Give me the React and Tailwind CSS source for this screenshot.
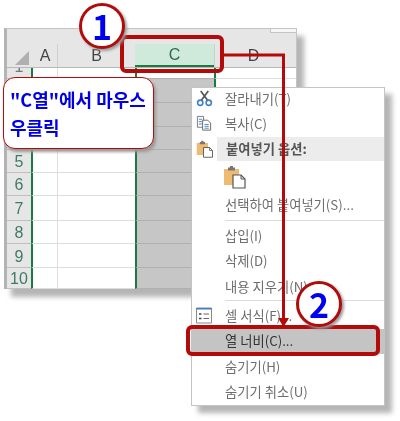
const FONT = "font-['Noto_Sans_CJK_KR','Noto_Sans',sans-serif]";

const rows = [
  { label: "1", h: "h-[11px]" },
  { label: "", h: "h-[24px]" },
  { label: "", h: "h-[24px]" },
  { label: "", h: "h-[23px]" },
  { label: "5", h: "h-[23px]" },
  { label: "6", h: "h-[24px]" },
  { label: "7", h: "h-[25px]" },
  { label: "8", h: "h-[23px]" },
  { label: "9", h: "h-[24px]" },
  { label: "10", h: "h-[21px]" },
];

function ScissorsIcon() {
  return (
    <svg width="17" height="17" viewBox="0 0 18 18" fill="none">
      <path d="M5 1 L12.5 11 M13 1 L5.5 11" stroke="#555" strokeWidth="1.8" />
      <circle cx="4.5" cy="13.5" r="2.8" stroke="#3f7fc4" strokeWidth="1.7" />
      <circle cx="13.5" cy="13.5" r="2.8" stroke="#3f7fc4" strokeWidth="1.7" />
    </svg>
  );
}

function CopyIcon() {
  return (
    <svg width="17" height="17" viewBox="0 0 18 18" fill="none">
      <path d="M1.5 1.5 H8 V13 H1.5 Z" fill="#fff" stroke="#777" />
      <path d="M3 4.5 H6.5 M3 7 H6.5 M3 9.5 H6.5" stroke="#4a86c5" />
      <path d="M7 5.5 H12.5 L15.5 8.5 V16 H7 Z" fill="#fff" stroke="#666" />
      <path d="M9 10 H13.5 M9 12 H13.5 M9 14 H13.5" stroke="#4a86c5" />
    </svg>
  );
}

function PasteIcon({ size }) {
  return (
    <svg width={size} height={size} viewBox="0 0 24 24" fill="none">
      <path d="M1 4 H16 V20 H1 Z" fill="#eebb72" />
      <path d="M5 4 V2.5 H7 V1 H10 V2.5 H12 V5.5 H5 Z" fill="#777" />
      <path d="M10 10 H18 L22 14 V23 H10 Z" fill="#fff" stroke="#555" strokeWidth="1.2" />
      <path d="M18 10 V14 H22" stroke="#555" strokeWidth="1" />
    </svg>
  );
}

function FormatIcon() {
  return (
    <svg width="16" height="17" viewBox="0 0 16 17" fill="none">
      <path d="M0.5 1 H15.5 V16 H0.5 Z" fill="#fff" stroke="#888" />
      <path d="M0.5 1 H15.5 V2.5 H0.5 Z" fill="#3f7fc4" />
      <path d="M3 7 H5.5 M3 11.5 H5.5" stroke="#444" strokeWidth="1.6" />
      <path d="M7.5 7 H13 M7.5 11.5 H13" stroke="#666" strokeWidth="1.2" />
    </svg>
  );
}

function Item({ icon, active, className = "h-[25.4px]", children }) {
  return (
    <div className={`flex items-center ${className} ${active ? "bg-[#c4c4c4]" : ""}`}>
      <div className="flex w-[33px] shrink-0 items-center pl-[4px]">{icon}</div>
      <span className={`text-[13.3px] ${active ? "text-[#333]" : "text-[#6e6e6e]"}`}>{children}</span>
    </div>
  );
}

function Badge({ className, children }) {
  return (
    <div
      className={`absolute flex h-[46px] w-[46px] items-center justify-center rounded-full border-[3px] border-[#b30a0a] bg-white text-[34px] leading-none font-bold text-[#0000f0] shadow-[2px_2px_3px_#999] ${className}`}
    >
      {children}
    </div>
  );
}

export default function App() {
  return (
    <div className={`relative h-[421px] w-[400px] overflow-hidden bg-white pt-[28px] pl-[4px] blur-[0.3px] ${FONT}`}>
      {/* sheet */}
      <div className="h-[261px] w-[293px] border-t border-r border-[#c4c4c4] border-l-[3px] border-l-[#b4b4b4] bg-[#e6e6e6] shadow-[7px_8px_5px_#b5b5b5]">
        <div className="flex h-[15px] justify-end">
          <div className="h-[4px] w-[26px] border-b border-l border-[#c4c4c4] bg-[#f6f6f6]" />
        </div>
        {/* column heads */}
        <div className="flex h-[23px] font-['Liberation_Sans',sans-serif] text-[16px] text-[#444]">
          <div className="flex w-[24px] items-end justify-end pr-[2px] pb-[2px]">
            <div className="h-0 w-0 border-b-[14px] border-l-[14px] border-b-[#b0b0b0] border-l-transparent" />
          </div>
          <div className="flex w-[27px] items-center justify-center border-r border-[#cfcfcf] pl-[2px]">A</div>
          <div className="flex w-[77px] items-center justify-center">B</div>
          <div className="flex w-[79px] items-center justify-center border-b-2 border-[#1a7a45] bg-[#cfeadb] text-[#2f6b4a]">C</div>
          <div className="flex flex-1 items-center justify-center border-l border-[#cfcfcf] pr-[4px]">D</div>
        </div>
        {/* rows */}
        <div className="flex h-[222px] flex-col border-t border-[#b8b8b8]">
          {rows.map((row, i) => (
            <div key={i} className={`flex ${row.h} overflow-hidden`}>
              <div className="flex w-[24px] items-center justify-center border-b border-[#c0c0c0] pt-[2px] font-['Liberation_Sans',sans-serif] text-[16px] text-[#3f7a68]">
                <span className={i === 0 ? "-translate-y-[7px] text-[#777]" : ""}>{row.label}</span>
              </div>
              <div className="w-[27px] border-r border-b border-l-2 border-[#dedede] border-l-[#1a7a45] bg-white" />
              <div className="w-[77px] border-b border-[#dedede] bg-white" />
              <div className={`w-[79px] border-b border-l-2 border-[#b0b0b0] border-l-[#1a7a45] ${i === 0 ? "bg-white" : "bg-[#c6c6c6]"}`} />
              <div className={`flex-1 border-b ${i < 2 ? "border-l-2 border-[#dedede] border-l-[#1a7a45] bg-white" : "border-[#b0b0b0] bg-[#c6c6c6]"}`} />
            </div>
          ))}
        </div>
      </div>

      {/* context menu */}
      <div className="absolute top-[87px] left-[191px] h-[319px] w-[194px] border border-[#c4c4c4] bg-white shadow-[7px_7px_5px_#b5b5b5]">
        <Item icon={<ScissorsIcon />} className="h-[23.3px] pb-[2px]">잘라내기(T)</Item>
        <Item icon={<CopyIcon />}>복사(C)</Item>
        <div className="flex h-[25px] items-center">
          <div className="flex w-[25px] shrink-0 items-center pl-[4px]">
            <PasteIcon size={18} />
          </div>
          <div className="flex h-[24px] flex-1 items-center bg-[#ececec] pl-[9px] text-[13.3px] font-bold text-[#555]">
            붙여넣기 옵션:
          </div>
        </div>
        <div className="flex h-[31px] items-center pl-[31px]">
          <PasteIcon size={24} />
        </div>
        <Item>선택하여 붙여넣기(S)...</Item>
        <div className="mt-[2px] mb-[2px] ml-[33px] h-px bg-[#dcdcdc]" />
        <Item>삽입(I)</Item>
        <Item>삭제(D)</Item>
        <Item>내용 지우기(N)</Item>
        <div className="mt-[1px] mb-[2px] ml-[33px] h-px bg-[#dcdcdc]" />
        <Item icon={<FormatIcon />}>셀 서식(F)...</Item>
        <Item active>열 너비(C)...</Item>
        <Item>숨기기(H)</Item>
        <Item>숨기기 취소(U)</Item>
      </div>

      {/* callout */}
      <div className="absolute top-[77px] left-[3px] flex h-[72px] w-[151px] flex-col justify-center gap-[6px] rounded-[12px] border-[1.5px] border-[#b30a0a] bg-white pl-[6px] text-[18px] leading-[22px] font-bold whitespace-nowrap text-[#0000e6] shadow-[2px_3px_3px_#999]">
        <div>"C열"에서 마우스</div>
        <div>우클릭</div>
      </div>

      {/* red highlights and arrow */}
      <div className="absolute top-[35px] left-[120px] h-[38px] w-[104px] rounded-[6px] border-[4px] border-[#b30a0a]" />
      <div className="absolute top-[325px] left-[186px] h-[31px] w-[194px] rounded-[6px] border-[4px] border-[#b30a0a]" />
      <svg className="absolute top-0 left-0" width="400" height="421" fill="none">
        <path d="M222 55 H283.5 V320" stroke="#b30a0a" strokeWidth="3" />
        <path d="M278 318 H289 L283.5 327 Z" fill="#b30a0a" />
      </svg>

      <Badge className="top-[3px] left-[79px]">1</Badge>
      <Badge className="top-[281px] left-[296px]">2</Badge>
    </div>
  );
}
